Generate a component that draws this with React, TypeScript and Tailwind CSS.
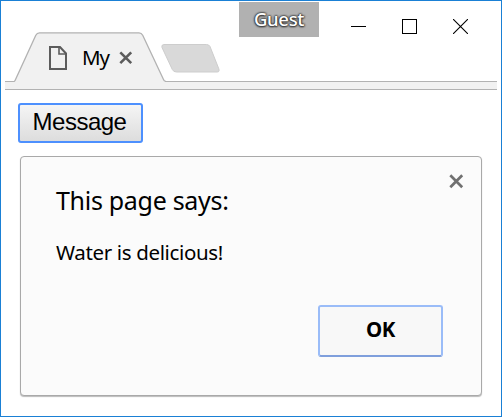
import React from "react";

const UI_FONT = "font-['Noto_Sans','Open_Sans',sans-serif]";

function Tab() {
  return (
    <div className="relative ml-[9px] mt-[31px] h-[50px] w-[152px] shrink-0">
      <svg className="absolute inset-0" width="152" height="50" viewBox="0 0 152 50" fill="none">
        <path
          d="M0 50V49.5Q.8 49.3 1.3 48L21.8 3.3Q23 .8 25.5 .8H125Q127.5 .8 128.7 3.3L149.5 47.5Q150.3 49.4 151.5 49.5V50Z"
          fill="#f1f1f1"
        />
        <path
          d="M0 49.5Q.8 49.3 1.3 48L21.8 3.3Q23 .8 25.5 .8H125Q127.5 .8 128.7 3.3L149.5 47.5Q150.3 49.4 152 49.5"
          stroke="#b2b2b2"
          strokeWidth="1.3"
        />
        <path d="M1.5 50H150.5" stroke="#f1f1f1" />
      </svg>
      <div className="relative flex h-full items-center pl-[34px]">
        <svg className="mt-[2px]" width="20" height="26" viewBox="0 0 20 26" fill="none" stroke="#5c5c5c" strokeWidth="2">
          <path d="M2 2H12L18 8.5V24H2Z" />
          <path d="M11 2V9H18" strokeWidth="1.6" />
        </svg>
        <span className={`ml-[14px] w-[29px] whitespace-nowrap text-[20.5px] leading-[30px] tracking-[-1px] text-black ${UI_FONT}`}>
          My
        </span>
        <svg className="ml-[8px] mt-[2px]" width="14" height="14" viewBox="0 0 14 14" stroke="#5c5c5c" strokeWidth="2.6">
          <path d="M1.3 1.3L12.2 12.2M12.2 1.3L1.3 12.2" />
        </svg>
      </div>
    </div>
  );
}

function WindowControls() {
  return (
    <div className="ml-[32px] mt-[18px] flex h-[15px] gap-[36px]">
      <svg width="15" height="15" shapeRendering="crispEdges">
        <path d="M0 7.5H15" stroke="#000" />
      </svg>
      <svg width="15" height="15" shapeRendering="crispEdges" fill="none">
        <rect x=".5" y=".5" width="14" height="14" stroke="#000" />
      </svg>
      <svg width="15" height="15" viewBox="0 0 15 15">
        <path d="M0 0L15 15M15 0L0 15" stroke="#000" strokeWidth="1.1" />
      </svg>
    </div>
  );
}

function Dialog() {
  return (
    <section className={`ml-[15px] mt-[13px] h-[240px] w-[462px] rounded-[4px] border border-[#a9a9a9] bg-[#fbfbfb] text-black shadow-[0_1px_1px_#bbb] ${UI_FONT}`}>
      <div className="flex items-start justify-between pl-[35px] pr-[17px]">
        <h1 className="mt-[25px] h-[37px] whitespace-nowrap text-[25px] leading-[36px] tracking-[-0.3px]">
          This page says:
        </h1>
        <svg className="mt-[17px]" width="15" height="15" viewBox="0 0 15 15" stroke="#707070" strokeWidth="2.7">
          <path d="M1.3 1.3L13.2 13.2M13.2 1.3L1.3 13.2" />
        </svg>
      </div>
      <p className="ml-[35px] mt-[18px] whitespace-nowrap text-[20.5px] leading-[30px] tracking-[-0.35px]">
        Water is delicious!
      </p>
      <div className="mr-[38px] mt-[38px] flex justify-end">
        <button className="h-[52px] w-[125px] rounded-[3px] border-2 border-[#9abcf8] border-b-[#7f9fdc] bg-[#f8f8f8] pb-[4px] text-[20.5px] font-bold leading-[30px] tracking-[-0.3px]">
          OK
        </button>
      </div>
    </section>
  );
}

export default function App() {
  return (
    <div className="h-[417px] w-[502px] overflow-hidden border border-[#1a80d5] bg-white px-[4px]">
      <header className="relative z-10 flex h-[80px] items-start">
        <Tab />
        <svg className="-ml-[5px] mt-[43px] shrink-0" width="60" height="29" viewBox="0 0 60 29">
          <path
            d="M3 .5H45.5Q48 .5 49 2.5L57.8 24.8Q59 28 56 28H15.5Q12.5 28 11.3 25.5L1 3.5Q0 .8 3 .5Z"
            fill="#d9d9d9"
            stroke="#cdcdcd"
          />
        </svg>
        <div className={`ml-[18px] mt-px flex h-[35px] w-[80px] shrink-0 items-center justify-center bg-[#b1b1b1] pb-[2px] text-[18.5px] font-medium tracking-[-0.3px] text-white [text-shadow:0_0_2px_#333,0_0_2px_#333,0_0_2px_#333,0_1px_2px_#444] ${UI_FONT}`}>
          Guest
        </div>
        <WindowControls />
      </header>
      <div className="h-[9px] border-y border-[#b2b2b2] bg-[#f1f1f1]" />
      <main>
        <button className="ml-[13px] mt-[13px] block h-[40px] w-[125px] rounded-[3px] border-2 border-[#4d90fe] bg-linear-to-b from-[#f5f5f5] to-[#dddddd] pb-[2px] pr-[2px] font-['Liberation_Sans',Arial,sans-serif] text-[24px] leading-[34px] tracking-[-0.5px] text-black">
          Message
        </button>
        <Dialog />
      </main>
    </div>
  );
}
